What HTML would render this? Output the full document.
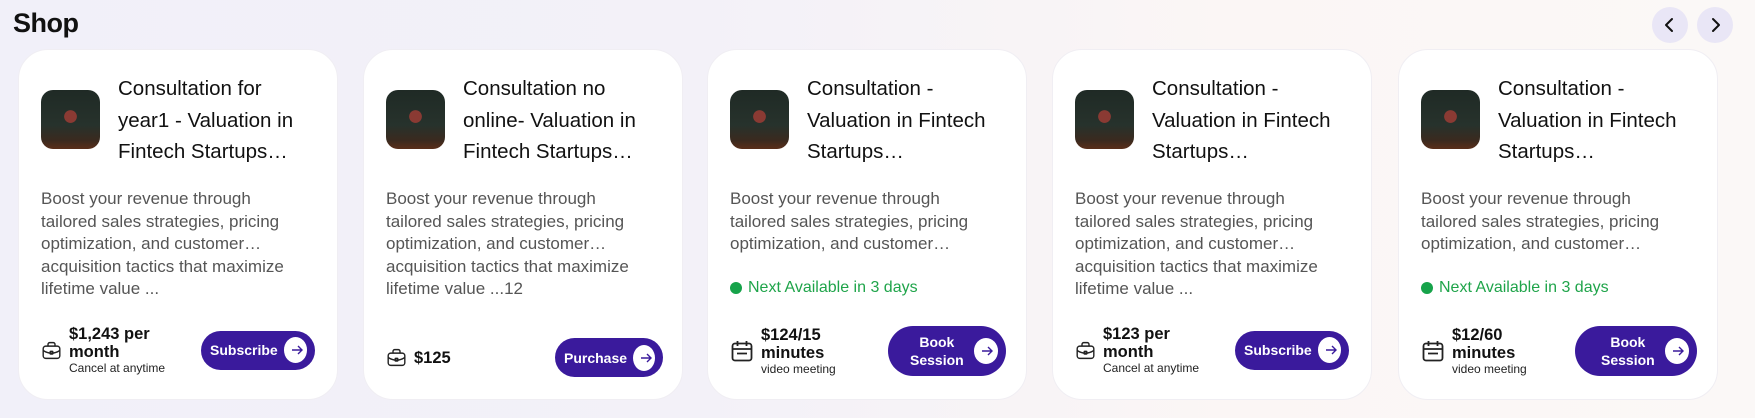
<!DOCTYPE html>
<html><head><meta charset="utf-8"><style>
*{box-sizing:border-box;margin:0;padding:0}
body{width:1755px;height:418px;overflow:hidden;font-family:"Liberation Sans",sans-serif;
background:linear-gradient(90deg,#f1f0f9 0%,#f3f1f8 40%,#fbf6f5 70%,#fbf8f7 100%);position:relative}
h1{position:absolute;left:13px;top:8px;font-size:27px;font-weight:700;color:#111;letter-spacing:-0.5px}
.nav{position:absolute;top:7px;width:36px;height:36px;border-radius:50%;background:#e9e6f6}
.nav svg{position:absolute;left:9px;top:9px}
.card{position:absolute;top:49px;width:320px;height:351px;background:#fff;border-radius:30px;border:1px solid #f0eef3}
.img{position:absolute;left:22px;top:40px;width:59px;height:59px;border-radius:12px;overflow:hidden;
background:radial-gradient(circle at 50% 45%,#8a3a33 0 14%,transparent 15%),linear-gradient(180deg,#1f2a25 0%,#27322c 60%,#3a2a1f 85%,#5a2e1a 100%)}
.title{position:absolute;left:99px;top:23px;white-space:nowrap;font-size:20.5px;line-height:31.5px;color:#111}
.desc{position:absolute;left:22px;top:138px;white-space:nowrap;font-size:17px;line-height:22.6px;color:#555}
.avail{position:absolute;left:22px;top:229px;font-size:16px;color:#1fa44a;display:flex;align-items:center}
.avail i{display:inline-block;width:12px;height:12px;border-radius:50%;background:#16a34a;margin-right:6px}
.row{position:absolute;left:22px;right:22px;display:flex;align-items:center;justify-content:space-between}
.pr{display:flex;align-items:center}
.pr svg{margin-right:7px;flex:none}
.p1{font-size:16.5px;font-weight:700;color:#111;line-height:18px}
.p2{font-size:12px;color:#222;line-height:15px}
.btn{background:#3a1a9c;color:#fff;border-radius:22px;display:flex;align-items:center;font-size:14px;font-weight:700;padding:0 8px 0 9px}
.btn b{display:inline-block;width:26px;height:26px;border-radius:50%;background:#fff;margin-left:6px;position:relative}
.btn b svg{position:absolute;left:6px;top:6px}
</style></head><body>
<h1>Shop</h1>
<div class="nav" style="left:1652px"><svg width="18" height="18" viewBox="0 0 18 18"><path d="M11 3L5 9l6 6" stroke="#111" stroke-width="2" fill="none" stroke-linecap="round" stroke-linejoin="round"/></svg></div>
<div class="nav" style="left:1697px"><svg width="18" height="18" viewBox="0 0 18 18"><path d="M7 3l6 6-6 6" stroke="#111" stroke-width="2" fill="none" stroke-linecap="round" stroke-linejoin="round"/></svg></div>

<div class="card" style="left:18px">
<div class="img"></div>
<div class="title">Consultation for<br>year1 - Valuation in<br>Fintech Startups…</div>
<div class="desc">Boost your revenue through<br>tailored sales strategies, pricing<br>optimization, and customer…<br>acquisition tactics that maximize<br>lifetime value ...</div>
<div class="row" style="top:278px;height:44px">
<div class="pr"><svg width="21" height="21" viewBox="0 0 24 24" fill="none" stroke="#222" stroke-width="1.6"><rect x="2.5" y="7" width="19" height="14" rx="3"/><path d="M8 7V5a2 2 0 0 1 2-2h4a2 2 0 0 1 2 2v2M2.5 12c3 2 6 3 9.5 3s6.5-1 9.5-3"/><rect x="10.5" y="13" width="3" height="3" rx=".5"/></svg>
<div><div class="p1">$1,243 per<br>month</div><div class="p2">Cancel at anytime</div></div></div>
<div class="btn" style="height:39px;width:114px">Subscribe<b><svg width="14" height="14" viewBox="0 0 14 14"><path d="M2 7h10M8 3l4 4-4 4" stroke="#3a1a9c" stroke-width="1.4" fill="none"/></svg></b></div>
</div></div>

<div class="card" style="left:363px">
<div class="img"></div>
<div class="title">Consultation no<br>online- Valuation in<br>Fintech Startups…</div>
<div class="desc">Boost your revenue through<br>tailored sales strategies, pricing<br>optimization, and customer…<br>acquisition tactics that maximize<br>lifetime value ...12</div>
<div class="row" style="top:288px;height:39px">
<div class="pr"><svg width="21" height="21" viewBox="0 0 24 24" fill="none" stroke="#222" stroke-width="1.6"><rect x="2.5" y="7" width="19" height="14" rx="3"/><path d="M8 7V5a2 2 0 0 1 2-2h4a2 2 0 0 1 2 2v2M2.5 12c3 2 6 3 9.5 3s6.5-1 9.5-3"/><rect x="10.5" y="13" width="3" height="3" rx=".5"/></svg>
<div class="p1">$125</div></div>
<div class="btn" style="height:39px;width:108px;margin-right:-3px">Purchase<b><svg width="14" height="14" viewBox="0 0 14 14"><path d="M2 7h10M8 3l4 4-4 4" stroke="#3a1a9c" stroke-width="1.4" fill="none"/></svg></b></div>
</div></div>

<div class="card" style="left:707px">
<div class="img"></div>
<div class="title">Consultation -<br>Valuation in Fintech<br>Startups…</div>
<div class="desc">Boost your revenue through<br>tailored sales strategies, pricing<br>optimization, and customer…</div>
<div class="avail"><i></i>Next Available in 3 days</div>
<div class="row" style="top:276px;height:50px">
<div class="pr"><svg width="24" height="24" viewBox="0 0 24 24" fill="none" stroke="#222" stroke-width="1.8"><rect x="2.5" y="4.5" width="19" height="17" rx="2.5"/><path d="M2.5 10h19M7.5 2v5M16.5 2v5M7 14.5h10"/></svg>
<div><div class="p1">$124/15<br>minutes</div><div class="p2">video meeting</div></div></div>
<div class="btn" style="height:50px;width:118px;border-radius:25px;padding-left:18px;margin-right:-2px"><span style="text-align:center;line-height:18px;width:66px">Book Session</span><b><svg width="14" height="14" viewBox="0 0 14 14"><path d="M2 7h10M8 3l4 4-4 4" stroke="#3a1a9c" stroke-width="1.4" fill="none"/></svg></b></div>
</div></div>

<div class="card" style="left:1052px">
<div class="img"></div>
<div class="title">Consultation -<br>Valuation in Fintech<br>Startups…</div>
<div class="desc">Boost your revenue through<br>tailored sales strategies, pricing<br>optimization, and customer…<br>acquisition tactics that maximize<br>lifetime value ...</div>
<div class="row" style="top:278px;height:44px">
<div class="pr"><svg width="21" height="21" viewBox="0 0 24 24" fill="none" stroke="#222" stroke-width="1.6"><rect x="2.5" y="7" width="19" height="14" rx="3"/><path d="M8 7V5a2 2 0 0 1 2-2h4a2 2 0 0 1 2 2v2M2.5 12c3 2 6 3 9.5 3s6.5-1 9.5-3"/><rect x="10.5" y="13" width="3" height="3" rx=".5"/></svg>
<div><div class="p1">$123 per<br>month</div><div class="p2">Cancel at anytime</div></div></div>
<div class="btn" style="height:39px;width:114px">Subscribe<b><svg width="14" height="14" viewBox="0 0 14 14"><path d="M2 7h10M8 3l4 4-4 4" stroke="#3a1a9c" stroke-width="1.4" fill="none"/></svg></b></div>
</div></div>

<div class="card" style="left:1398px">
<div class="img"></div>
<div class="title">Consultation -<br>Valuation in Fintech<br>Startups…</div>
<div class="desc">Boost your revenue through<br>tailored sales strategies, pricing<br>optimization, and customer…</div>
<div class="avail"><i></i>Next Available in 3 days</div>
<div class="row" style="top:276px;height:50px">
<div class="pr"><svg width="24" height="24" viewBox="0 0 24 24" fill="none" stroke="#222" stroke-width="1.8"><rect x="2.5" y="4.5" width="19" height="17" rx="2.5"/><path d="M2.5 10h19M7.5 2v5M16.5 2v5M7 14.5h10"/></svg>
<div><div class="p1">$12/60<br>minutes</div><div class="p2">video meeting</div></div></div>
<div class="btn" style="height:50px;width:122px;border-radius:25px;padding-left:22px;margin-right:-2px"><span style="text-align:center;line-height:18px;width:66px">Book Session</span><b><svg width="14" height="14" viewBox="0 0 14 14"><path d="M2 7h10M8 3l4 4-4 4" stroke="#3a1a9c" stroke-width="1.4" fill="none"/></svg></b></div>
</div></div>
</body></html>
